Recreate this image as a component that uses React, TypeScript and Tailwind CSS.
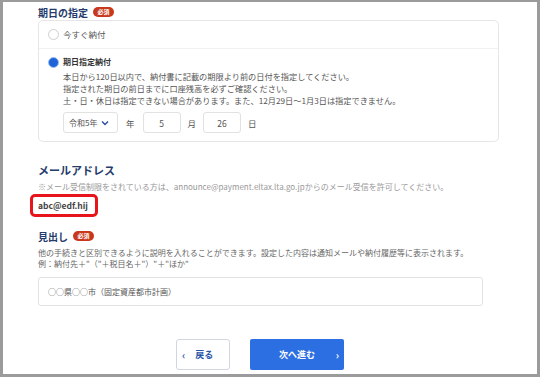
import React from 'react';

const font = { fontFamily: '"Noto Sans CJK JP", "Noto Sans", sans-serif' };

function RequiredBadge() {
  return (
    <span className="ml-[5px] inline-flex h-[10px] w-[21px] items-center justify-center rounded-full bg-[#c8381c] text-[6px] font-bold leading-none text-white">
      必須
    </span>
  );
}

function Radio({ checked }: { checked: boolean }) {
  return checked ? (
    <span className="h-[11px] w-[11px] shrink-0 rounded-full border border-[#9fbff0] bg-[#1e63d8]" />
  ) : (
    <span className="h-[11px] w-[11px] shrink-0 rounded-full border border-[#cfcfcf] bg-white" />
  );
}

function DateBox({ value }: { value: string }) {
  return (
    <div className="flex h-[21px] w-[38px] items-center justify-center rounded-[3px] border border-[#e2e2e2] bg-white text-[8.5px] text-[#555]">
      {value}
    </div>
  );
}

export default function App() {
  return (
    <div
      className="h-[377px] w-[540px] overflow-hidden border-b-[3px] border-l-[3px] border-r-[3px] border-t-[2px] border-[#9b9b9b] bg-white pl-[35px] pt-[3px]"
      style={font}
    >
      {/* 期日の指定 */}
      <div className="flex h-[14px] items-center text-[10px] font-bold text-[#243b6b]">
        期日の指定
        <RequiredBadge />
      </div>

      <div className="mt-[1px] w-[461px] rounded-[5px] border border-[#e6e6e6]">
        <div className="flex h-[28px] items-center gap-[4px] border-b border-[#f1f1f1] pl-[9px] text-[8.5px] text-[#555]">
          <Radio checked={false} />
          今すぐ納付
        </div>

        <div className="pb-[8px] pl-[9px] pt-[7px]">
          <div className="flex h-[12px] items-center gap-[4px] text-[8px] font-bold text-[#333]">
            <Radio checked />
            期日指定納付
          </div>
          <div className="pl-[15px] text-[8.2px] leading-[12px] text-[#555]">
            <p className="mt-[2px]">本日から120日以内で、納付書に記載の期限より前の日付を指定してください。</p>
            <p>指定された期日の前日までに口座残高を必ずご確認ください。</p>
            <p>土・日・休日は指定できない場合があります。また、12月29日～1月3日は指定できません。</p>

            <div className="mt-[6px] flex items-center text-[8.5px] text-[#555]">
              <div className="flex h-[21px] w-[55px] items-center justify-between rounded-[3px] border border-[#e2e2e2] bg-white pl-[5px] pr-[8px] text-[8px]">
                <span>令和5年</span>
                <svg width="8" height="6" viewBox="0 0 8 6" fill="none">
                  <path d="M1 1.5L4 4.5L7 1.5" stroke="#2a4f9a" strokeWidth="1.4" />
                </svg>
              </div>
              <span className="ml-[8px] mr-[8px]">年</span>
              <DateBox value="5" />
              <span className="ml-[7px] mr-[7px]">月</span>
              <DateBox value="26" />
              <span className="ml-[7px]">日</span>
            </div>
          </div>
        </div>
      </div>

      {/* メールアドレス */}
      <div className="mt-[20px] flex h-[16px] items-center text-[11px] font-bold text-[#243b6b]">
        メールアドレス
      </div>
      <p className="mt-[3px] h-[12px] text-[8px] leading-[12px] text-[#999]">
        ※メール受信制限をされている方は、announce@payment.eltax.lta.go.jpからのメール受信を許可してください。
      </p>
      <div className="-ml-[8px] mt-[1px] h-[23px] w-[68px] rounded-[5px] border-[3px] border-[#e8141b] px-[5px] text-[8.5px] font-bold leading-[17px] text-[#444]">
        abc@edf.hij
      </div>

      {/* 見出し */}
      <div className="mt-[12px] flex h-[14px] items-center text-[10px] font-bold text-[#243b6b]">
        見出し
        <RequiredBadge />
      </div>
      <div className="mt-[4px] text-[8px] leading-[11px] text-[#666]">
        <p>他の手続きと区別できるように説明を入れることができます。設定した内容は通知メールや納付履歴等に表示されます。</p>
        <p>例：納付先＋"（"＋税目名＋"）"＋"ほか"</p>
      </div>
      <div className="mt-[8px] flex h-[29px] w-[445px] items-center rounded-[3px] border border-[#e2e2e2] pl-[9px] text-[8px] text-[#555]">
        ○○県○○市（固定資産都市計画）
      </div>

      {/* buttons */}
      <div className="ml-[138px] mt-[33px] flex gap-[20px]">
        <button className="flex h-[31px] w-[54px] items-center rounded-[3px] border border-[#cfd6df] bg-white pl-[5px] text-[#2a55a8]">
          <span className="text-[10px] font-bold">‹</span>
          <span className="ml-[10px] text-[9px] font-bold">戻る</span>
        </button>
        <button className="relative flex h-[31px] w-[94px] items-center justify-center rounded-[2px] bg-[#2c6fe3] text-white">
          <span className="text-[9px] font-bold">次へ進む</span>
          <span className="absolute right-[5px] text-[10px] font-bold">›</span>
        </button>
      </div>
    </div>
  );
}
